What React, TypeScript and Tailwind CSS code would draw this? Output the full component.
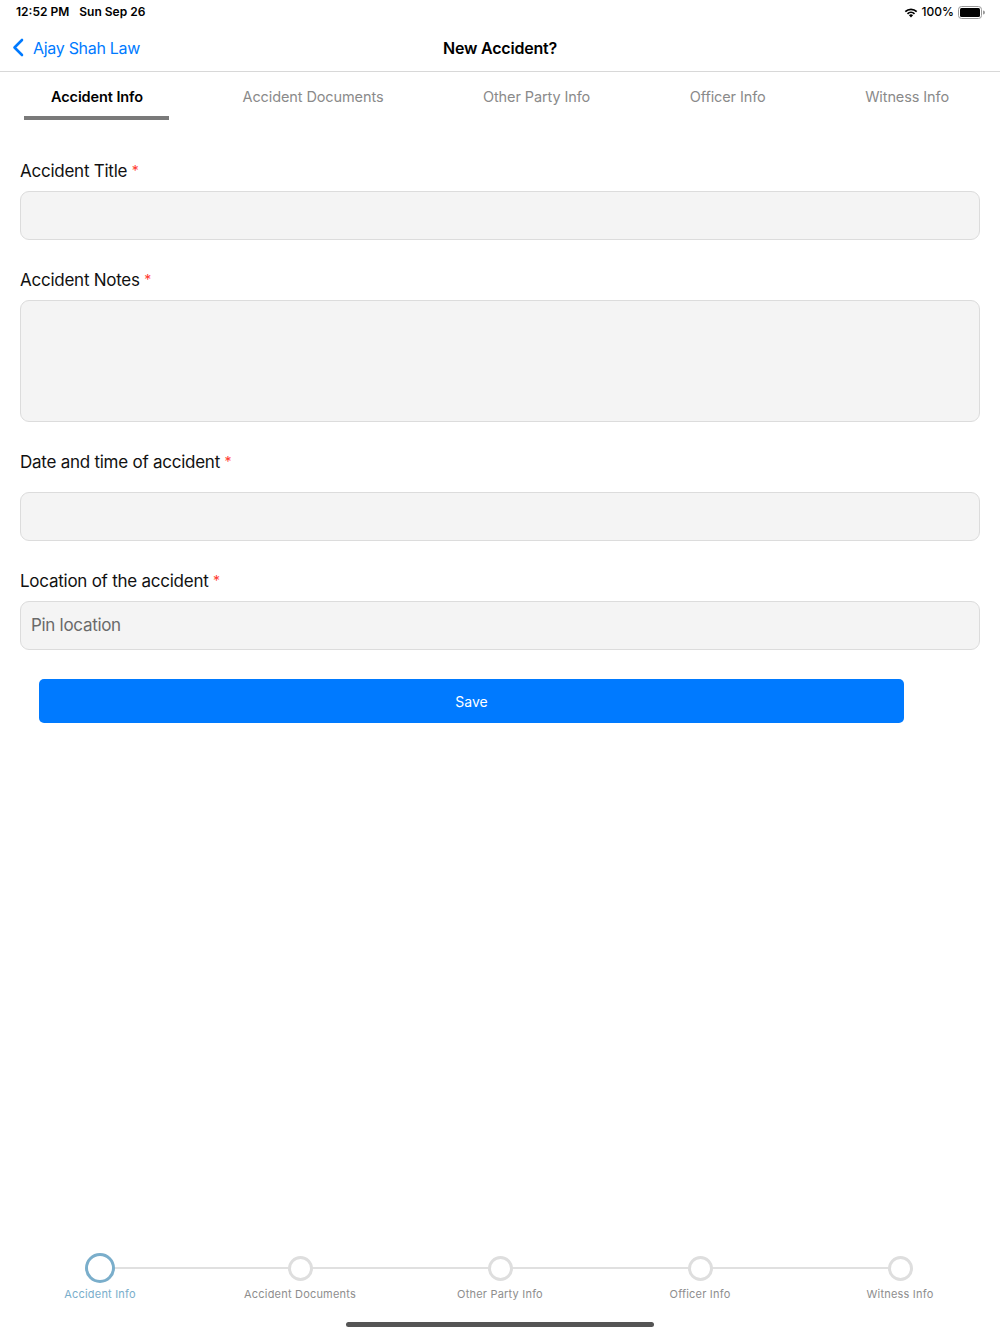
import React from "react";

const tabs = [
  "Accident Info",
  "Accident Documents",
  "Other Party Info",
  "Officer Info",
  "Witness Info",
];

function Label({ text }: { text: string }) {
  return (
    <div className="h-[22px] text-[17px] tracking-[-0.25px] leading-[22px] text-[#111]">
      {text} <span className="text-[#ff3b30] text-[14px] align-top">*</span>
    </div>
  );
}

function Field({ h, children }: { h: string; children?: React.ReactNode }) {
  return (
    <div
      className={`${h} w-full rounded-[9px] border border-[#dcdcdc] bg-[#f4f4f4] flex items-center px-[10px] text-[17px] tracking-[-0.3px] text-[#6a6a6a]`}
    >
      {children}
    </div>
  );
}

function StatusBar() {
  return (
    <div className="h-[24px] flex items-center justify-between pl-[16px] pr-[15px] text-[12px] font-semibold text-black">
      <div className="flex gap-[10px]">
        <span>12:52 PM</span>
        <span>Sun Sep 26</span>
      </div>
      <div className="flex items-center gap-[4px]">
        <svg width="14" height="11" viewBox="0 0 14 11">
          <path d="M7 10.5 L4.9 8.3 A3 3 0 0 1 9.1 8.3 Z" fill="#000" />
          <path d="M2.9 6.3 A5.8 5.8 0 0 1 11.1 6.3 L9.9 7.5 A4.1 4.1 0 0 0 4.1 7.5 Z" fill="#000" />
          <path d="M0.7 4.1 A9 9 0 0 1 13.3 4.1 L12.1 5.3 A7.3 7.3 0 0 0 1.9 5.3 Z" fill="#000" />
        </svg>
        <span className="font-medium">100%</span>
        <svg width="27" height="13" viewBox="0 0 27 13">
          <rect x="0.5" y="0.5" width="23" height="12" rx="3" fill="none" stroke="#999" />
          <rect x="2" y="2" width="20" height="9" rx="1.5" fill="#000" />
          <path d="M25 4.5 a1.5 1.5 0 0 1 0 4 z" fill="#999" />
        </svg>
      </div>
    </div>
  );
}

export default function App() {
  return (
    <div
      className="w-[1000px] h-[1334px] bg-white flex flex-col"
      style={{ fontFamily: "Inter, 'Noto Sans', sans-serif" }}
    >
      <StatusBar />

      <div className="relative h-[48px] border-b border-[#d8d8d8] flex items-center justify-center">
        <div className="absolute left-[12px] top-0 h-full flex items-center gap-[9px] text-[#007aff] text-[16px] tracking-[-0.3px]">
          <svg width="12" height="19" viewBox="0 0 12 19">
            <path d="M10 2 L2.5 9.5 L10 17" fill="none" stroke="#007aff" strokeWidth="2.6" strokeLinecap="round" strokeLinejoin="round" />
          </svg>
          <span>Ajay Shah Law</span>
        </div>
        <span className="text-[16px] tracking-[-0.2px] font-semibold text-black pt-[1px]">New Accident?</span>
      </div>

      <div className="h-[48px] flex justify-between items-center px-[51px] text-[14.5px] tracking-[-0.1px] pt-[1px]">
        {tabs.map((t, i) => (
          <div key={t} className="relative h-full flex items-center">
            <span className={i === 0 ? "font-semibold text-black" : "text-[#8a8a8a]"}>{t}</span>
            {i === 0 && (
              <div className="absolute -left-[27px] -right-[26px] bottom-0 h-[4px] bg-[#7a7a7a]" />
            )}
          </div>
        ))}
      </div>

      <div className="px-[20px] pt-[40px] flex flex-col">
        <Label text="Accident Title" />
        <div className="mt-[9px]">
          <Field h="h-[49px]" />
        </div>

        <div className="mt-[29px]">
          <Label text="Accident Notes" />
        </div>
        <div className="mt-[9px]">
          <Field h="h-[122px]" />
        </div>

        <div className="mt-[29px]">
          <Label text="Date and time of accident" />
        </div>
        <div className="mt-[19px]">
          <Field h="h-[49px]" />
        </div>

        <div className="mt-[29px]">
          <Label text="Location of the accident" />
        </div>
        <div className="mt-[9px]">
          <Field h="h-[49px]">Pin location</Field>
        </div>

        <div className="mt-[29px] pl-[19px] pr-[76px]">
          <div className="h-[44px] rounded-[5px] bg-[#007aff] flex items-center justify-center text-white text-[14px]">
            Save
          </div>
        </div>
      </div>

      <div className="flex-1" />

      <div className="relative grid grid-cols-5 h-[50px]">
        <div className="absolute left-[100px] right-[100px] top-[15px] h-[2px] bg-[#e0e0e0]" />
        {tabs.map((t, i) => (
          <div key={t} className="relative flex flex-col items-center">
            <div className="h-[32px] flex items-center justify-center">
              {i === 0 ? (
                <div className="w-[30px] h-[30px] rounded-full border-[3px] border-[#7aaecb] bg-white" />
              ) : (
                <div className="w-[25px] h-[25px] rounded-full border-[3px] border-[#dedede] bg-white" />
              )}
            </div>
            <span
              className={`mt-[2px] text-[11px] tracking-[0.2px] ${i === 0 ? "text-[#7aaecb]" : "text-[#8e8e8e]"}`}
            >
              {t}
            </span>
          </div>
        ))}
      </div>

      <div className="h-[32px] flex justify-center items-start pt-[20px]">
        <div className="w-[308px] h-[5px] rounded-full bg-[#555]" />
      </div>
    </div>
  );
}
